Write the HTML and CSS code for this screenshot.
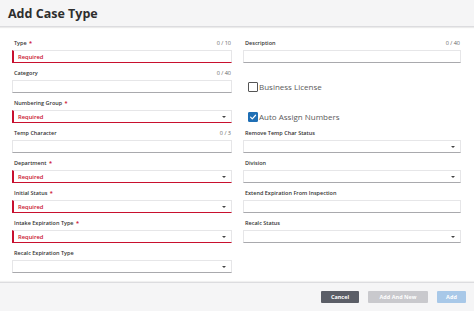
FILE: index.html
```html
<!DOCTYPE html>
<html>
<head>
<meta charset="utf-8">
<link rel="stylesheet" href="styles.css">
</head>
<body>
<div class="dialog">
  <header class="head"><h1 class="title">Add Case Type</h1></header>
  <main class="form">
    <div class="field">
      <div class="lbl"><span>Type <b class="req">*</b></span><span class="count">0 / 10</span></div>
      <div class="input error"><span class="ph">Required</span></div>
    </div>
    <div class="field">
      <div class="lbl"><span>Description</span><span class="count">0 / 40</span></div>
      <div class="input"></div>
    </div>

    <div class="field">
      <div class="lbl"><span>Category</span><span class="count">0 / 40</span></div>
      <div class="input"></div>
    </div>
    <div class="check-field">
      <span class="box"></span><span class="check-text">Business License</span>
    </div>

    <div class="field">
      <div class="lbl"><span>Numbering Group <b class="req">*</b></span></div>
      <div class="input error select"><span class="ph">Required</span><span class="caret"></span></div>
    </div>
    <div class="check-field">
      <span class="box checked"><svg viewBox="0 0 10 10" width="10" height="10"><path d="M2 5.2 L4.1 7.3 L8.2 2.8" fill="none" stroke="#fff" stroke-width="1.5" stroke-linecap="round" stroke-linejoin="round"/></svg></span><span class="check-text">Auto Assign Numbers</span>
    </div>

    <div class="field">
      <div class="lbl"><span>Temp Character</span><span class="count">0 / 3</span></div>
      <div class="input"></div>
    </div>
    <div class="field">
      <div class="lbl"><span>Remove Temp Char Status</span></div>
      <div class="input select"><span class="caret"></span></div>
    </div>

    <div class="field">
      <div class="lbl"><span>Department <b class="req">*</b></span></div>
      <div class="input error select"><span class="ph">Required</span><span class="caret"></span></div>
    </div>
    <div class="field">
      <div class="lbl"><span>Division</span></div>
      <div class="input select"><span class="caret"></span></div>
    </div>

    <div class="field">
      <div class="lbl"><span>Initial Status <b class="req">*</b></span></div>
      <div class="input error select"><span class="ph">Required</span><span class="caret"></span></div>
    </div>
    <div class="field">
      <div class="lbl"><span>Extend Expiration From Inspection</span></div>
      <div class="input"></div>
    </div>

    <div class="field">
      <div class="lbl"><span>Intake Expiration Type <b class="req">*</b></span></div>
      <div class="input error select"><span class="ph">Required</span><span class="caret"></span></div>
    </div>
    <div class="field">
      <div class="lbl"><span>Recalc Status</span></div>
      <div class="input select"><span class="caret"></span></div>
    </div>

    <div class="field">
      <div class="lbl"><span>Recalc Expiration Type</span></div>
      <div class="input select"><span class="caret"></span></div>
    </div>
    <div></div>
  </main>
  <footer class="foot">
    <button class="btn cancel">Cancel</button>
    <button class="btn addnew">Add And New</button>
    <button class="btn add">Add</button>
  </footer>
</div>
</body>
</html>
```

FILE: styles.css
```css
html, body {
  margin: 0;
  padding: 0;
  background: #fff;
}
body {
  font-family: "Open Sans", "Noto Sans", sans-serif;
  color: #333;
  width: 474px;
  height: 311px;
  overflow: hidden;
}
.dialog {
  display: flex;
  flex-direction: column;
  height: 311px;
}
.head {
  height: 26px;
  background: #f5f5f6;
  border-bottom: 1px solid #dcdcdf;
  box-shadow: 0 1px 1px rgba(0,0,0,0.08);
  display: flex;
  align-items: center;
  padding-left: 8px;
}
.title {
  margin: 0;
  font-size: 12.5px;
  font-weight: 700;
  color: #2e2e2e;
}
.form {
  flex: 1;
  display: grid;
  grid-template-columns: 220px 218px;
  grid-auto-rows: 30px;
  column-gap: 11px;
  padding: 13px 13px 0 12px;
}
.field {
  display: flex;
  flex-direction: column;
}
.lbl {
  display: flex;
  justify-content: space-between;
  font-size: 5.5px;
  font-weight: 600;
  color: #333;
  height: 10px;
  line-height: 7px;
  padding-left: 2px;
}
.req {
  color: #d0243a;
  font-weight: 700;
  margin-left: 1px;
}
.count {
  font-weight: 400;
  color: #666;
  padding-right: 1px;
}
.input {
  height: 13px;
  box-sizing: border-box;
  border: 1px solid #e6e6e8;
  border-bottom: 1px solid #a9a9ad;
  background: #fff;
  display: flex;
  align-items: center;
  justify-content: space-between;
  padding: 0 5px 0 5px;
}
.input.error {
  border-left: 2px solid #c8102e;
  border-bottom: 1px solid #c8102e;
  padding-left: 4px;
}
.ph {
  font-size: 5.8px;
  font-weight: 600;
  color: #c8102e;
}
.caret {
  margin-left: auto;
  width: 0;
  height: 0;
  border-left: 2px solid transparent;
  border-right: 2px solid transparent;
  border-top: 2.5px solid #444;
}
.check-field {
  display: flex;
  align-items: center;
  padding-top: 12px;
  padding-left: 5px;
  height: 10px;
}
.box {
  width: 10px;
  height: 10px;
  box-sizing: border-box;
  border: 1px solid #555;
  border-radius: 1px;
  background: #fff;
  display: flex;
  align-items: center;
  justify-content: center;
}
.box.checked {
  background: #1f6fb5;
  border-color: #1f6fb5;
}
.box svg {
  display: block;
}
.check-text {
  font-size: 8px;
  color: #5a5a5a;
  margin-left: 1px;
  line-height: 10px;
}
.foot {
  height: 28px;
  background: #f5f5f6;
  border-top: 1px solid #dcdcdf;
  box-shadow: 0 -1px 1px rgba(0,0,0,0.06);
  display: flex;
  justify-content: flex-end;
  align-items: center;
  gap: 9px;
  padding-right: 8px;
}
.btn {
  height: 12px;
  border: none;
  border-radius: 1px;
  padding: 0;
  font-family: "Open Sans", "Noto Sans", sans-serif;
  font-size: 5.5px;
  font-weight: 700;
  color: #fff;
  cursor: pointer;
}
.cancel {
  width: 38px;
  background: #5b5e67;
}
.addnew {
  width: 60px;
  background: #c9c9cd;
}
.add {
  width: 29px;
  background: #a8c8e8;
}
```
